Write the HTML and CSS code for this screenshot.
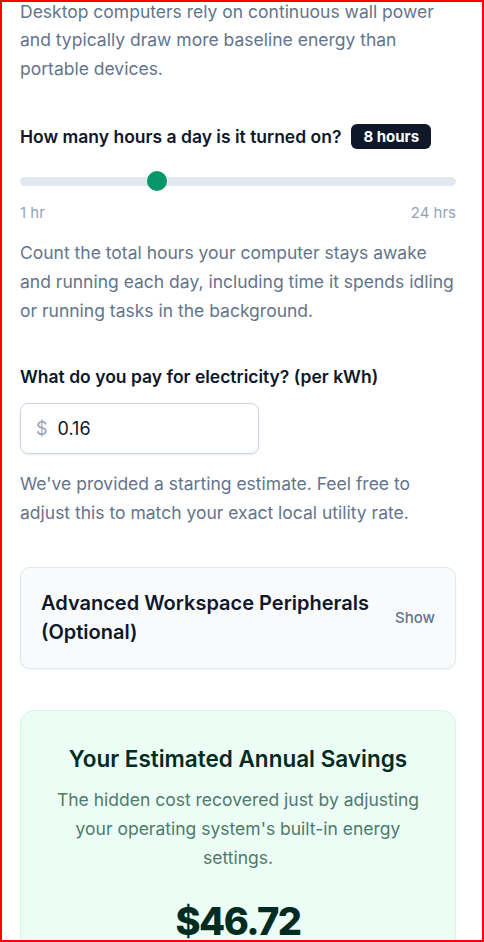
FILE: index.html
```html
<!DOCTYPE html>
<html>
	<head>
		<meta charset="utf-8">
		<title>Energy savings calculator</title>
		<link rel="stylesheet" href="styles.css">
	</head>
	<body>
		<div class="page">
			<p class="hint first">Desktop computers rely on continuous wall power and typically draw more baseline energy than portable devices.</p>

			<div class="field hours">
				<div class="label-row">
					<label class="label" for="hours">How many hours a day is it turned on?</label>
					<span class="badge">8 hours</span>
				</div>
				<input class="range" id="hours" type="range" min="1" max="24" value="8">
				<div class="range-ends">
					<span>1 hr</span>
					<span>24 hrs</span>
				</div>
				<p class="hint">Count the total hours your computer stays awake and running each day, including time it spends idling or running tasks in the background.</p>
			</div>

			<div class="field rate">
				<label class="label" for="rate">What do you pay for electricity? (per kWh)</label>
				<div class="money">
					<span class="currency">$</span>
					<input class="money-input" id="rate" type="text" value="0.16">
				</div>
				<p class="hint">We've provided a starting estimate. Feel free to adjust this to match your exact local utility rate.</p>
			</div>

			<div class="extras">
				<h3 class="extras-title">Advanced Workspace Peripherals (Optional)</h3>
				<button class="toggle">Show</button>
			</div>

			<div class="result">
				<h2 class="result-title">Your Estimated Annual Savings</h2>
				<p class="result-text">The hidden cost recovered just by adjusting your operating system's built-in energy settings.</p>
				<div class="result-amount">$46.72</div>
			</div>
		</div>
	</body>
</html>
```

FILE: styles.css
```css
* {
	margin: 0;
	padding: 0;
	box-sizing: border-box;
}
html, body {
	height: 942px;
}
body {
	border: 2px solid #ff0000;
	overflow: hidden;
	background: #fff;
	font-family: Inter, "Noto Sans", sans-serif;
	color: #0f172a;
}
.page {
	padding: 0 26px 0 18px;
}
.hint {
	font-size: 17.5px;
	line-height: 28.8px;
	color: #64748b;
}
.hint.first {
	margin-top: -4.4px;
}
.field {
	margin-top: 40px;
}
.label-row {
	display: flex;
	align-items: center;
	gap: 10px;
	height: 25px;
}
.label {
	display: block;
	font-size: 17.5px;
	font-weight: 600;
	line-height: 24px;
	color: #0f172a;
}
.badge {
	background: #0f172a;
	color: #fff;
	font-size: 15px;
	font-weight: 700;
	line-height: 25px;
	padding: 0 12px;
	border-radius: 6px;
}
.range {
	-webkit-appearance: none;
	appearance: none;
	display: block;
	width: 100%;
	height: 20px;
	margin-top: 22px;
	background: transparent;
	outline: none;
}
.range::-webkit-slider-runnable-track {
	height: 9px;
	border-radius: 5px;
	background: #e2e8f0;
}
.range::-webkit-slider-thumb {
	-webkit-appearance: none;
	width: 20px;
	height: 20px;
	margin-top: -5.5px;
	border-radius: 50%;
	background: #059669;
	border: none;
}
.range-ends {
	display: flex;
	justify-content: space-between;
	margin-top: 12px;
	font-size: 15px;
	line-height: 20px;
	color: #94a3b8;
}
.hours .hint {
	margin-top: 16px;
}
.rate {
	margin-top: 40px;
}
.money {
	display: flex;
	align-items: center;
	width: 239px;
	height: 51px;
	margin-top: 14px;
	padding: 0 15px;
	border: 1px solid #cbd5e1;
	border-radius: 8px;
	box-shadow: 0 1px 2px rgba(15, 23, 42, 0.08);
}
.currency {
	font-size: 18px;
	color: #94a3b8;
	margin-right: 10px;
}
.money-input {
	border: none;
	outline: none;
	width: 100%;
	font-family: inherit;
	font-size: 18px;
	color: #0f172a;
	background: transparent;
}
.rate .hint {
	margin-top: 16px;
}
.extras {
	display: flex;
	align-items: center;
	justify-content: space-between;
	gap: 24px;
	margin-top: 39px;
	padding: 20px;
	background: #f8fafc;
	border: 1px solid #e2e8f0;
	border-radius: 10px;
	box-shadow: 0 1px 2px rgba(15, 23, 42, 0.05);
}
.extras-title {
	font-size: 20px;
	font-weight: 600;
	line-height: 29.5px;
	padding-top: 1px;
	color: #0f172a;
}
.toggle {
	border: none;
	background: none;
	font-family: inherit;
	font-size: 15px;
	font-weight: 500;
	color: #64748b;
	cursor: pointer;
}
.result {
	margin-top: 41px;
	padding: 33px 30px 40px;
	background: #ecfdf5;
	border: 1px solid #d1fae5;
	border-radius: 14px;
	text-align: center;
}
.result-title {
	font-size: 22.5px;
	font-weight: 600;
	line-height: 30px;
	color: #022c22;
}
.result-text {
	margin-top: 12px;
	font-size: 17.5px;
	line-height: 28.8px;
	color: #4f7a6d;
}
.result-amount {
	margin-top: 24px;
	font-size: 38px;
	font-weight: 800;
	line-height: 50px;
	letter-spacing: -0.04em;
	color: #022c22;
}
```
